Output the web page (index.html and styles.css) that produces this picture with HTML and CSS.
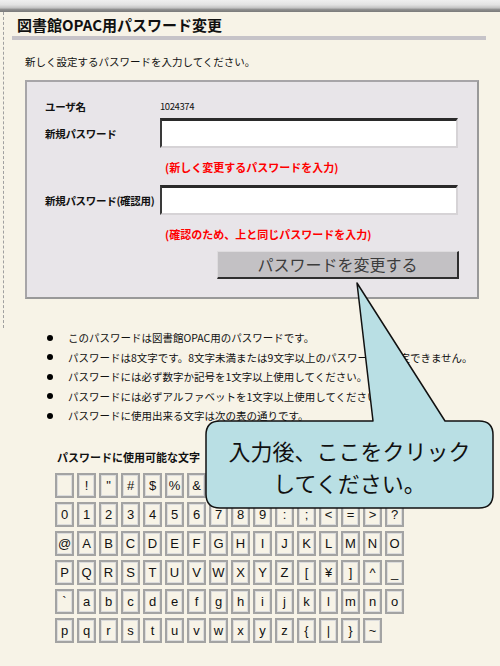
FILE: index.html
```html
<!DOCTYPE html>
<html lang="ja">
<head>
<meta charset="utf-8">
<title>図書館OPAC用パスワード変更</title>
<link rel="stylesheet" href="styles.css">
</head>
<body>
<div class="topbar"></div>
<div class="frame">
  <h1 class="title">図書館OPAC用パスワード変更</h1>
  <p class="intro">新しく設定するパスワードを入力してください。</p>
  <div class="panel">
    <div class="row row-user"><span class="label">ユーザ名</span><span class="uid">1024374</span></div>
    <div class="row row-pw"><span class="label">新規パスワード</span><span class="input"></span></div>
    <div class="note">(新しく変更するパスワードを入力)</div>
    <div class="row row-pw2"><span class="label">新規パスワード(確認用)</span><span class="input"></span></div>
    <div class="note">(確認のため、上と同じパスワードを入力)</div>
    <div class="btn">パスワードを変更する</div>
  </div>
</div>
<ul class="rules">
  <li><span class="dot"></span>このパスワードは図書館OPAC用のパスワードです。</li>
  <li><span class="dot"></span>パスワードは8文字です。8文字未満または9文字以上のパスワードは設定できません。</li>
  <li><span class="dot"></span>パスワードには必ず数字か記号を1文字以上使用してください。</li>
  <li><span class="dot"></span>パスワードには必ずアルファベットを1文字以上使用してください。</li>
  <li><span class="dot"></span>パスワードに使用出来る文字は次の表の通りです。</li>
</ul>
<div class="charhead">パスワードに使用可能な文字</div>
<div class="chars">
  <span></span><span>!</span><span>"</span><span>#</span><span>$</span><span>%</span><span>&amp;</span><span>'</span><span>(</span><span>)</span><span>*</span><span>+</span><span>,</span><span>-</span><span>.</span><span>/</span>
  <span>0</span><span>1</span><span>2</span><span>3</span><span>4</span><span>5</span><span>6</span><span>7</span><span>8</span><span>9</span><span>:</span><span>;</span><span>&lt;</span><span>=</span><span>&gt;</span><span>?</span>
  <span>@</span><span>A</span><span>B</span><span>C</span><span>D</span><span>E</span><span>F</span><span>G</span><span>H</span><span>I</span><span>J</span><span>K</span><span>L</span><span>M</span><span>N</span><span>O</span>
  <span>P</span><span>Q</span><span>R</span><span>S</span><span>T</span><span>U</span><span>V</span><span>W</span><span>X</span><span>Y</span><span>Z</span><span>[</span><span>¥</span><span>]</span><span>^</span><span>_</span>
  <span>`</span><span>a</span><span>b</span><span>c</span><span>d</span><span>e</span><span>f</span><span>g</span><span>h</span><span>i</span><span>j</span><span>k</span><span>l</span><span>m</span><span>n</span><span>o</span>
  <span>p</span><span>q</span><span>r</span><span>s</span><span>t</span><span>u</span><span>v</span><span>w</span><span>x</span><span>y</span><span>z</span><span>{</span><span>|</span><span>}</span><span>~</span>
</div>

<svg class="callout-shape" width="500" height="666" viewBox="0 0 500 666">
  <path d="M220,421 L373,421 L357,283 L445,421 L479,421 Q493,421 493,435 L493,494 Q493,508 479,508 L220,508 Q206,508 206,494 L206,435 Q206,421 220,421 Z" fill="#b9dfe4" stroke="#111" stroke-width="1.5" stroke-linejoin="round"/>
</svg>
<div class="callout-text">入力後、ここをクリック<br>してください。</div>
</body>
</html>
```
FILE: styles.css
```css
html, body {
  margin: 0;
  padding: 0;
}
body {
  width: 500px;
  height: 666px;
  overflow: hidden;
  background: #f7f3e7;
  font-family: "Noto Sans CJK JP", "Noto Sans", sans-serif;
  color: #111;
  position: relative;
}
.topbar {
  height: 12px;
  background: linear-gradient(#efefef 0%, #e2e2e2 40%, #c4c4c4 65%, #8c8c8c 80%, #7a7a7a 100%);
}
.frame {
  margin-left: 3px;
  border-left: 1px dashed #a0a0a0;
  padding-bottom: 29px;
}
.title {
  margin: 0 0 0 8px;
  width: 474px;
  box-sizing: border-box;
  padding: 3px 0 1px 5px;
  font-size: 15px;
  line-height: 20px;
  font-weight: bold;
  border-bottom: 4px solid #c6c3c8;
}
.intro {
  margin: 15px 0 0 21px;
  font-size: 10.5px;
  line-height: 14px;
}
.panel {
  margin: 11px 0 0 21px;
  width: 454px;
  box-sizing: border-box;
  background: #e8e5e9;
  border: 2px solid #a7a5a8;
  border-right-color: #999;
  border-bottom-color: #999;
  padding: 16px 19px 18px 18px;
}
.row {
  display: flex;
  align-items: center;
}
.label {
  width: 115px;
  flex: none;
  font-size: 10.5px;
  font-weight: bold;
  letter-spacing: -0.3px;
  white-space: nowrap;
}
.row-user {
  height: 16px;
}
.uid {
  font-size: 9.5px;
  letter-spacing: -0.4px;
}
.row-pw {
  margin-top: 4px;
}
.row-pw2 {
  margin-top: 11px;
}
.input {
  display: block;
  width: 298px;
  height: 30px;
  box-sizing: border-box;
  background: #fff;
  border-top: 3px solid #2a2a2a;
  border-left: 2px solid #3a3a3a;
  border-right: 2px solid #d6d3d6;
  border-bottom: 2px solid #d6d3d6;
}
.note {
  margin: 12px 0 0 120px;
  font-size: 11px;
  line-height: 14px;
  font-weight: bold;
  color: #ff0000;
  white-space: nowrap;
}
.btn {
  margin: 10px 0 0 172px;
  width: 242px;
  height: 28px;
  box-sizing: border-box;
  background: #c3c1c4;
  border-top: 1px solid #dedcde;
  border-left: 1px solid #dedcde;
  border-right: 2px solid #2e2e2e;
  border-bottom: 2px solid #2e2e2e;
  font-size: 16px;
  line-height: 25px;
  text-align: center;
  color: #3c3c3c;
}
.rules {
  list-style: none;
  margin: 0;
  padding: 0 0 0 47px;
}
.rules li {
  display: flex;
  align-items: center;
  height: 19.5px;
  font-size: 10.5px;
  white-space: nowrap;
}
.dot {
  width: 6px;
  height: 6px;
  border-radius: 50%;
  background: #000;
  margin-right: 15px;
  flex: none;
}
.charhead {
  margin: 24px 0 0 57px;
  font-size: 11px;
  line-height: 14px;
  font-weight: bold;
}
.chars {
  margin: 9px 0 0 55px;
  display: grid;
  grid-template-columns: repeat(16, 19px);
  grid-auto-rows: 25px;
  column-gap: 3px;
  row-gap: 4.2px;
}
.chars span {
  box-sizing: border-box;
  border: 2px solid #a3a3a3;
  box-shadow: inset 0 0 0 1px #dcdcdc;
  font-family: "Liberation Sans", "DejaVu Sans", sans-serif;
  font-size: 13px;
  line-height: 21px;
  text-align: center;
  color: #111;
}
.callout-shape {
  position: absolute;
  left: 0;
  top: 0;
}
.callout-text {
  position: absolute;
  left: 206px;
  top: 421px;
  width: 287px;
  padding-top: 13px;
  font-size: 22px;
  line-height: 32px;
  text-align: center;
  color: #111;
}
```
